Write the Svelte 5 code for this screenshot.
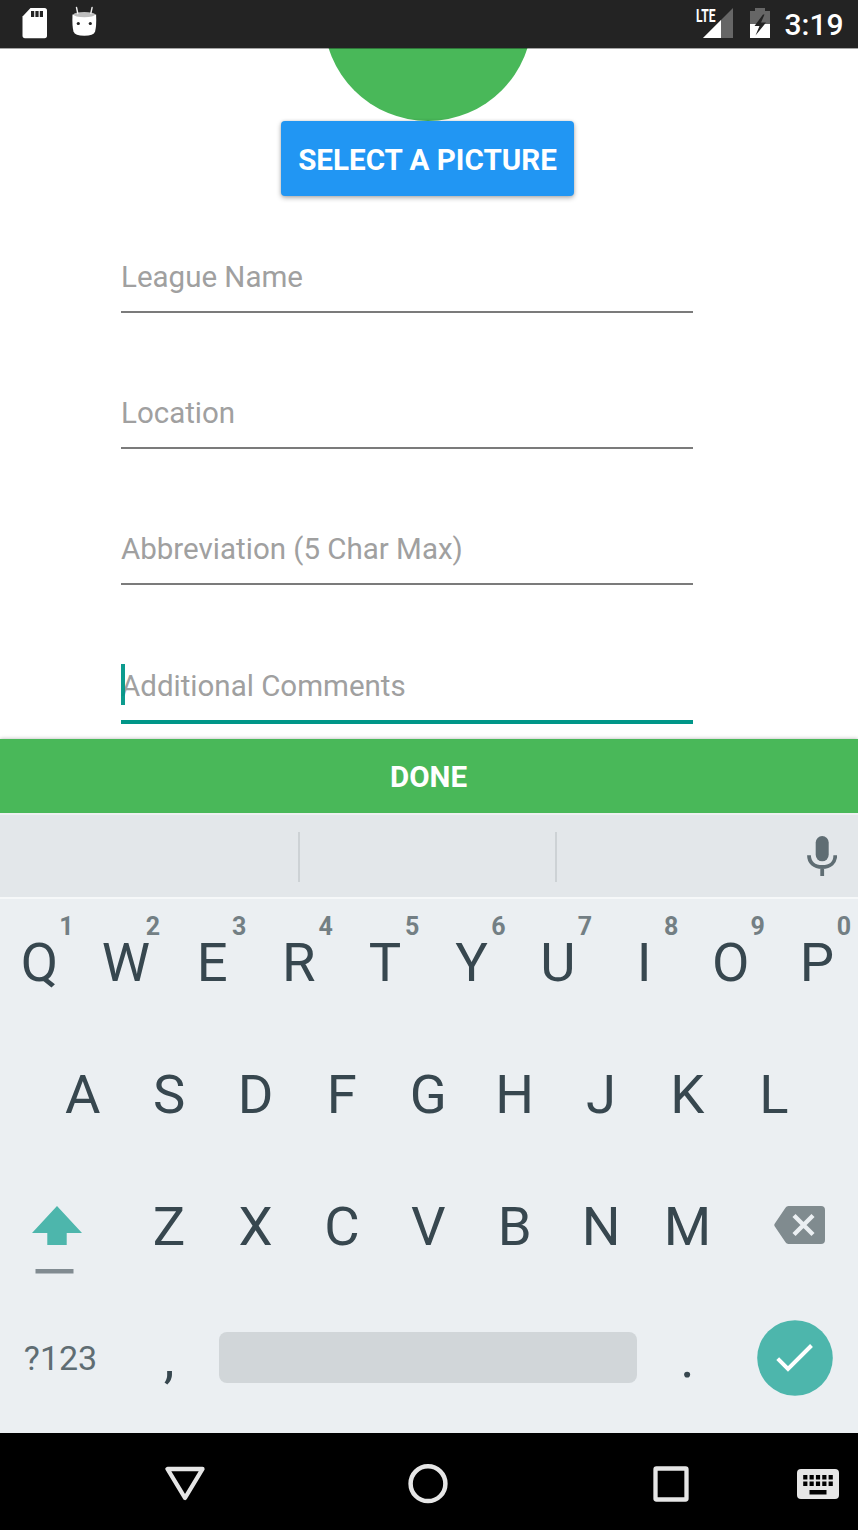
<script>
  const fields = ['League Name', 'Location', 'Abbreviation (5 Char Max)', 'Additional Comments'];
  const top = [...'QWERTYUIOP'].map((letter, i) => ({ letter, hint: (i + 1) % 10 }));
  const middle = [...'ASDFGHJKL'];
  const bottom = [...'ZXCVBNM'];
</script>

<div class="screen">
  <header class="status">
    <svg class="card" width="26" height="32" viewBox="0 0 26 32">
      <path d="M8.500 1H22.500Q25 1 25 3.500V28.500Q25 31.300 22.500 31.300H3Q.5 31.300 .5 28.500V9.500Z" fill="#fff" />
      <path d="M9 4h3.200v6H9zM13.400 4h3.200v6h-3.200zM17.800 4h3.200v6h-3.200z" fill="#232323" />
    </svg>
    <svg class="droid" width="28" height="32" viewBox="0 0 28 32">
      <path d="M1.500 8.500Q1 20 2.500 25.500Q4 29.800 13.300 29.800Q22.600 29.800 24.100 25.500Q25.600 20 25.100 8.500Z" fill="#fff" />
      <ellipse cx="13.300" cy="8.600" rx="10.800" ry="2.700" fill="#bdbdbd" />
      <path d="M6.800 7.500 5.500 1.500M19.800 7.500 21.100 1.500" stroke="#eee" stroke-width="1.400" stroke-linecap="round" />
      <circle cx="7.300" cy="17.500" r="1.600" fill="#232323" />
      <circle cx="19.300" cy="17.500" r="1.600" fill="#232323" />
    </svg>
    <div class="signal">
      <svg width="30" height="30" viewBox="0 0 30 30">
        <path d="M30 0V30H0Z" fill="#666" />
        <path d="M18 12V30H0Z" fill="#fff" />
      </svg>
      <span>LTE</span>
    </div>
    <svg class="battery" width="20" height="30" viewBox="0 0 20 30">
      <path d="M0 3H5V0H15V3H20V16H0Z" fill="#666" />
      <path d="M0 16H20V30H0Z" fill="#fff" />
      <path d="M13 6.500 4.500 18H9.500L5.500 27.500 16 14.500H11L14.500 6.500Z" fill="#232323" />
    </svg>
    <time>3:19</time>
  </header>

  <main>
    <div class="avatar"><svg width="210" height="73" viewBox="0 0 210 73"><circle cx="105" cy="-31.200" r="104.200" fill="#49b859" /></svg></div>
    <button class="pick">SELECT A PICTURE</button>
    <form>
      {#each fields as name, i}
        <div class="field" class:active={i === 3}><span>{name}</span></div>
      {/each}
    </form>
  </main>
  <button class="done">DONE</button>

  <section class="keyboard">
    <div class="suggest">
      <i></i><i></i>
      <svg width="30" height="42" viewBox="0 0 30 42">
        <rect x="8.700" y="1" width="13" height="25.300" rx="6.500" fill="#5f6d73" />
        <path d="M2 20.200C2 27.500 7 32 15.200 32S28.300 27.500 28.300 20.200M15.200 32V41" fill="none" stroke="#5f6d73" stroke-width="3.800" />
      </svg>
    </div>
    <div class="row">
      {#each top as key}
        <div class="key">{key.letter}<sup>{key.hint}</sup></div>
      {/each}
    </div>
    <div class="row home">
      {#each middle as letter}<div class="key">{letter}</div>{/each}
    </div>
    <div class="row">
      <div class="key wide shift">
        <svg width="50" height="68" viewBox="0 0 50 68">
          <path d="M25 0 50 27H34.700V39H15.300V27H0Z" fill="#4db6ac" />
          <path d="M3.500 63H41.500V67.500H3.500Z" fill="#818b91" />
        </svg>
      </div>
      {#each bottom as letter}<div class="key">{letter}</div>{/each}
      <div class="key wide back">
        <svg width="51" height="38" viewBox="0 0 51 38">
          <path d="M14.500 0H47Q51 0 51 4V34Q51 38 47 38H14.500Q12.500 38 11.500 36.300L.5 20Q0 19 .5 18L11.500 1.700Q12.500 0 14.500 0Z" fill="#808b8f" />
          <path d="M20 9.500 39 28.500M39 9.500 20 28.500" stroke="#ebeff2" stroke-width="4.400" />
        </svg>
      </div>
    </div>
    <div class="row last">
      <div class="key wide mode">?123</div>
      <div class="key">,</div>
      <div class="space"></div>
      <div class="key">.</div>
      <div class="key wide enter">
        <svg width="76" height="76" viewBox="0 0 76 76">
          <circle cx="38" cy="38" r="37.800" fill="#4db6ac" />
          <path d="M20.700 38.700 31 49 54.500 25.500" fill="none" stroke="#fff" stroke-width="4" />
        </svg>
      </div>
    </div>
  </section>

  <nav>
    <svg class="n-back" width="40" height="36" viewBox="0 0 40 36"><path d="M2.500 3H37.500L20 32Z" fill="none" stroke="#e6e6e6" stroke-width="4.300" stroke-linejoin="round" /></svg>
    <svg class="n-home" width="40" height="40" viewBox="0 0 40 40"><circle cx="20" cy="19.700" r="17.400" fill="none" stroke="#e6e6e6" stroke-width="4.500" /></svg>
    <svg class="n-recent" width="36" height="36" viewBox="0 0 36 36"><rect x="2.500" y="2.500" width="31" height="31" rx="1" fill="none" stroke="#e6e6e6" stroke-width="4.300" /></svg>
    <svg class="n-keys" width="42" height="30" viewBox="0 0 42 30">
      <rect width="42" height="30" rx="4" fill="#e6e6e6" />
      {#each [0, 1, 2, 3, 4] as col}
        <rect x={6.2 + col * 6.35} y="6" width="4.200" height="4.500" />
        <rect x={6.2 + col * 6.35} y="12.500" width="4.200" height="4.500" />
      {/each}
      <rect x="12.500" y="21" width="17" height="4.500" />
    </svg>
  </nav>
</div>

<style>
  :global(body) { background: #fff; overflow: hidden; }
  * { box-sizing: border-box; }
  svg { display: block; flex: none; }
  button { border: 0; padding: 0; font: 700 29.600px/1 Roboto, sans-serif; color: #fff; display: flex; align-items: center; justify-content: center; }
  .screen { width: 858px; height: 1530px; display: flex; flex-direction: column; overflow: hidden; font-family: Roboto, sans-serif; }
  .status { height: 48px; flex: none; background: #232323; display: flex; align-items: flex-start; padding: 7px 15px 0 21.500px; color: #fff; box-shadow: 0 1px 0 rgba(0, 0, 0, .35); position: relative; z-index: 1; }
  .droid { margin: -1px 0 0 23.500px; }
  .signal { margin-left: auto; position: relative; padding: 1px 0 0 7px; }
  .signal span { position: absolute; left: 0; top: 0; font: 700 18px/17px Roboto, sans-serif; transform: scaleX(.67); transform-origin: left; }
  .battery { margin: 1px 14.500px 0 17px; }
  time { font-size: 30px; font-weight: 500; line-height: 35px; width: 58.500px; white-space: nowrap; }
  main { height: 691px; flex: none; display: flex; flex-direction: column; align-items: center; background: #fff; padding-right: 2px; }
  .avatar { height: 73px; }
  .pick { width: 293px; height: 74.500px; border-radius: 4px; background: #2196f3; box-shadow: 0 2px 5px rgba(0, 0, 0, .3), 0 0 3px rgba(0, 0, 0, .12); padding-top: 5px; margin-right: 1px; }
  form { width: 572px; margin: 55.500px 0 0 121px; align-self: flex-start; display: flex; flex-direction: column; gap: 74px; }
  .field { height: 62px; border-bottom: 2px solid #7b7b7b; font-size: 29.500px; line-height: 53px; color: #a0a0a0; }
  .field.active { height: 65px; border-bottom: 4px solid #009688; line-height: 55px; position: relative; }
  .active::before { content: ''; position: absolute; left: 0; top: 5px; width: 4px; height: 41px; background: #009688; opacity: .95; }
  .done { height: 74px; flex: none; background: #49b859; padding: 4px 1px 0 0; box-shadow: 0 0 4px rgba(0, 0, 0, .3); position: relative; }
  .keyboard { height: 620px; flex: none; background: #ebeff2; position: relative; }
  .suggest { height: 86px; background: #e3e7ea; border-top: 2px solid #edf0f1; border-bottom: 2px solid #f6f8f9; display: flex; align-items: center; padding: 1px 21.500px 0 0; }
  .suggest i { width: 257px; height: 50px; border-right: 2.500px solid #cdd2d5; }
  .suggest i:first-child { width: 300px; }
  .suggest svg { margin: -1px 0 0 auto; }
  .row { display: flex; width: 864px; height: 132px; margin-left: -3.700px; font-size: 54.400px; line-height: 127px; color: #37474f; }
  .home { padding: 0 43.200px; }
  .key { flex: none; width: 86.400px; text-align: center; position: relative; }
  .key.wide { width: 129.600px; }
  sup { position: absolute; left: 63px; top: 13px; font-size: 25px; font-weight: 700; line-height: 30px; color: #737f84; }
  .shift svg { margin: 43px 0 0 35.500px; }
  .back svg { margin: 43px 0 0 43.500px; }
  .mode { font-size: 34px; line-height: 126px; color: #5f6d73; text-align: left; padding-left: 27.500px; }
  .last .key:not(.wide):not(.mode) { line-height: 128px; }
  .space { flex: none; width: 418px; height: 51px; margin: 37px 7px 0; border-radius: 8px; background: #d1d6d9; }
  .enter svg { margin: 25px 0 0 26.500px; }
  nav { height: 97px; background: #000; flex: none; display: flex; align-items: center; padding: 4px 19px 0 165px; }
  .n-home { margin-left: 203px; }
  .n-recent { margin-left: 205px; }
  .n-keys { margin-left: auto; }
</style>
